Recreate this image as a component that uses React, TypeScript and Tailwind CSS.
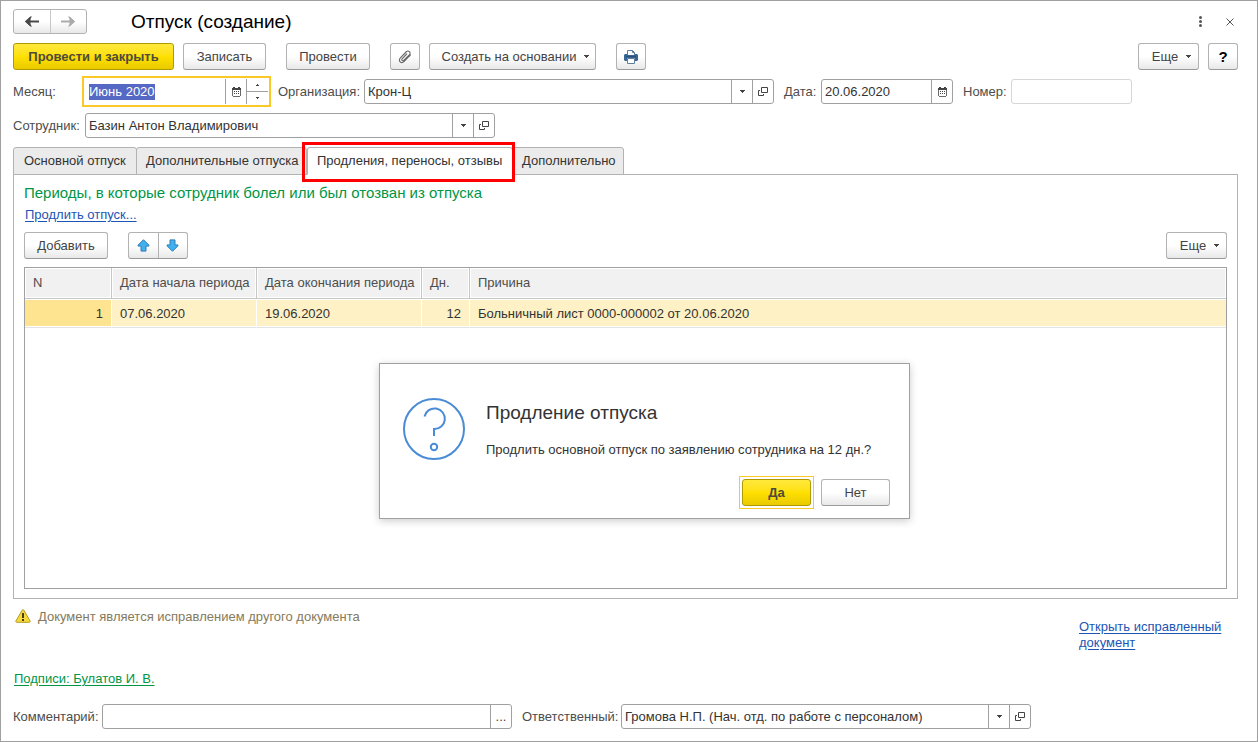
import { useEffect, useRef } from "react"
import type { ReactNode } from "react"

const btnBase =
  "flex h-[27px] shrink-0 items-center justify-center rounded-[3px] border text-[13px] leading-4"
const btnGray =
  "border-[#b2b2b2] border-b-[#9a9a9a] bg-linear-to-b from-white from-50% to-[#e8e8e8] text-[#444]"
const btnYellow =
  "border-[#b09a00] bg-linear-to-b from-[#ffe93a] via-[#ffe000] to-[#e9cb00] font-bold text-[#4d4a3c]"

const Caret = () => (
  <svg width="5" height="3" viewBox="0 0 5 3" aria-hidden="true">
    <path d="M0 0h5v1H4v1H3v1H2V2H1V1H0z" fill="#444" />
  </svg>
)

const CalendarIcon = () => (
  <svg width="9" height="10" viewBox="0 0 9 10" fill="#444" aria-hidden="true">
    <path d="M1 0h2v1H1zM6 0h2v1H6zM0 1h9v2H0z" />
    <path d="M0 3h1v6H0zM8 3h1v6H8zM1 9h7v1H1z" fill="#6a6a6a" />
    <path d="M2 4h1v1H2zM4 4h1v1H4zM6 4h1v1H6zM2 6h1v1H2zM4 6h1v1H4zM6 6h1v1H6z" />
  </svg>
)

const OpenIcon = () => (
  <svg
    width="10"
    height="10"
    viewBox="0 0 10 10"
    fill="none"
    stroke="#444"
    aria-hidden="true"
  >
    <path d="M3.5.5h6v5h-6zM2 3.5H.5v5h5V7" />
  </svg>
)

const ArrowIcon = ({ color, flip }: { color: string; flip?: boolean }) => (
  <svg
    width="14"
    height="11"
    viewBox="0 0 14 11"
    className={flip ? "rotate-180" : ""}
    aria-hidden="true"
  >
    <path d="M0 5.5L5.500.500V4.500H14v2H5.500v4z" fill={color} />
    <path d="M7 .5L3.500 5.500L7 10.500H5.500L0 5.500L5.500.500z" fill={color} />
  </svg>
)

const MoveIcon = ({ down }: { down?: boolean }) => (
  <svg
    width="13"
    height="13"
    viewBox="0 0 13 13"
    className={down ? "rotate-180" : ""}
    aria-hidden="true"
  >
    <path
      d="M6.5.7l5.4 5.4v1H9v5H4v-5H1.100v-1z"
      fill="#41b0ee"
      stroke="#2f7fb5"
      strokeLinejoin="round"
    />
  </svg>
)

const ClipIcon = () => (
  <svg
    width="14"
    height="14"
    viewBox="0 0 14 14"
    fill="none"
    stroke="#666"
    strokeWidth="1.1"
    strokeLinecap="round"
    aria-hidden="true"
  >
    <path d="M11.2 6.2l-5 5.2c-1.3 1.3-2.9 1.5-4 .5s-1-2.800.2-4.100L8 2c1-1 2.400-1.200 3.400-.300s.8 2.200-.1 3.200L6 10.200c-.6.6-1.400.7-1.900.2s-.4-1.200.2-1.900L8.700 4" />
    <path d="M12.500 4.800l-1.300 1.400" />
  </svg>
)

const PrinterIcon = () => (
  <svg width="14" height="14" viewBox="0 0 14 14" aria-hidden="true">
    <path d="M3.500 5V.500h5l2 2V5" fill="#fff" stroke="#5d7f9f" />
    <path d="M8.500.500v2h2" fill="none" stroke="#5d7f9f" />
    <path d="M1 4h2v1h8V4h2l1 1v5l-1 1h-2V8H3v3H1l-1-1V5z" fill="#376692" />
    <path d="M2 6h10v1H2z" fill="#28507a" />
    <path d="M3.500 8.500h7v5h-7z" fill="#fff" stroke="#5d7f9f" />
  </svg>
)

const WarningIcon = () => (
  <svg width="16" height="14" viewBox="0 0 16 14" aria-hidden="true">
    <path
      d="M7.200 1.100c.3-.6 1.300-.6 1.600 0l6.300 10.900c.3.600 0 1.300-.7 1.300H1.600c-.7 0-1-.7-.7-1.300z"
      fill="#f6d93a"
      stroke="#b39b2c"
    />
    <path d="M7 4h2v5H7zM7 10h2v2H7z" fill="#4a3f14" />
  </svg>
)

const QuestionIcon = () => (
  <svg
    width="62"
    height="62"
    viewBox="0 0 62 62"
    fill="none"
    stroke="#4a8bd6"
    strokeWidth="2"
    aria-hidden="true"
  >
    <circle cx="31" cy="31" r="30" />
    <path d="M21.500 18.500a10.300 10.300 0 1 1 9.500 12.500v7" />
    <circle cx="31" cy="49" r="3.200" />
  </svg>
)

const Field = ({
  id,
  label,
  value,
  className,
  labelClass = "",
  children,
}: {
  id: string
  label: string
  value: string
  className: string
  labelClass?: string
  children?: ReactNode
}) => (
  <>
    <label htmlFor={id} className={`shrink-0 text-[#4d4d4d] ${labelClass}`}>
      {label}
    </label>
    <div
      className={`flex h-[25px] min-w-0 rounded-[3px] border bg-white ${className}`}
    >
      <input
        id={id}
        type="text"
        defaultValue={value}
        className="min-w-0 flex-1 px-[3px] text-[#333] outline-none"
      />
      {children}
    </div>
  </>
)

const FieldButton = ({ label, children }: { label: string; children: ReactNode }) => (
  <button
    type="button"
    aria-label={label}
    className="flex w-[21px] shrink-0 items-center justify-center border-l border-[#a0a0a0] text-[#444]"
  >
    {children}
  </button>
)

const PickButtons = () => (
  <>
    <FieldButton label="Выбрать">
      <Caret />
    </FieldButton>
    <FieldButton label="Открыть">
      <OpenIcon />
    </FieldButton>
  </>
)

const MonthField = () => {
  const input = useRef<HTMLInputElement>(null)

  useEffect(() => {
    input.current?.focus()
    input.current?.select()
  }, [])

  return (
    <>
      <label htmlFor="month" className="w-[72px] shrink-0 text-[#4d4d4d]">
        Месяц:
      </label>
      <div className="flex h-[25px] w-[183px] items-stretch bg-white outline-2 outline-offset-1 outline-[#fac928]">
        <input
          id="month"
          ref={input}
          type="text"
          defaultValue="Июнь 2020"
          className="min-w-0 flex-1 px-1 text-[#333] outline-none selection:bg-[#5468c4] selection:text-white"
        />
        <FieldButton label="Календарь">
          <CalendarIcon />
        </FieldButton>
        <div className="flex w-[22px] shrink-0 flex-col border-l border-[#a0a0a0]">
          <button
            type="button"
            aria-label="Следующий месяц"
            className="flex flex-1 items-center justify-center border-b border-[#a0a0a0]"
          >
            <svg width="3" height="2" viewBox="0 0 3 2" aria-hidden="true">
              <path d="M1 0h1v1h1v1H0V1h1z" fill="#444" />
            </svg>
          </button>
          <button
            type="button"
            aria-label="Предыдущий месяц"
            className="flex flex-1 items-center justify-center"
          >
            <svg width="3" height="2" viewBox="0 0 3 2" aria-hidden="true">
              <path d="M0 0h3v1H2v1H1V1H0z" fill="#444" />
            </svg>
          </button>
        </div>
      </div>
    </>
  )
}

const Header = () => (
  <header className="flex h-[25px] items-center">
    <div className="flex h-[25px] w-[74px] rounded-[3px] border border-[#b2b2b2] bg-linear-to-b from-white from-50% to-[#e8e8e8]">
      <button
        type="button"
        aria-label="Назад"
        className="flex flex-1 items-center justify-center border-r border-[#c8c8c8]"
      >
        <ArrowIcon color="#4a4a4a" />
      </button>
      <button
        type="button"
        aria-label="Вперед"
        className="flex flex-1 items-center justify-center"
      >
        <ArrowIcon color="#ababab" flip />
      </button>
    </div>
    <h1 className="ml-11 text-[19px] leading-6 text-black">Отпуск (создание)</h1>
    <div className="mr-1 ml-auto flex items-center gap-[23px]">
      <button type="button" aria-label="Меню" className="p-px">
        <svg width="3" height="11" viewBox="0 0 3 11" fill="#555" aria-hidden="true">
          <circle cx="1.5" cy="1.5" r="1.5" />
          <circle cx="1.5" cy="5.5" r="1.5" />
          <circle cx="1.5" cy="9.5" r="1.5" />
        </svg>
      </button>
      <button type="button" aria-label="Закрыть">
        <svg width="8" height="8" viewBox="0 0 8 8" aria-hidden="true">
          <path d="M.5.5l7 7M7.500.500l-7 7" stroke="#555" />
        </svg>
      </button>
    </div>
  </header>
)

const Toolbar = () => (
  <div className="flex">
    <button type="button" className={`${btnBase} ${btnYellow} w-[161px]`}>
      Провести и закрыть
    </button>
    <button type="button" className={`${btnBase} ${btnGray} ml-[9px] w-[83px]`}>
      Записать
    </button>
    <button type="button" className={`${btnBase} ${btnGray} ml-5 w-[84px]`}>
      Провести
    </button>
    <button
      type="button"
      aria-label="Присоединенные файлы"
      className={`${btnBase} ${btnGray} ml-5 w-[30px]`}
    >
      <ClipIcon />
    </button>
    <button
      type="button"
      className={`${btnBase} ${btnGray} ml-[9px] w-[167px] gap-2 pl-[6px]`}
    >
      Создать на основании
      <Caret />
    </button>
    <button
      type="button"
      aria-label="Печать"
      className={`${btnBase} ${btnGray} ml-5 w-[30px]`}
    >
      <PrinterIcon />
    </button>
    <button
      type="button"
      className={`${btnBase} ${btnGray} ml-auto w-[61px] gap-2 pl-[6px]`}
    >
      Еще
      <Caret />
    </button>
    <button
      type="button"
      className={`${btnBase} ${btnGray} ml-[9px] w-[30px]`}
    >
      <span className="text-[15px] font-bold text-black">?</span>
    </button>
  </div>
)

const tabBase =
  "relative h-7 shrink-0 rounded-t-[3px] border border-[#b2b2b2] px-[9px] text-left whitespace-nowrap text-[#333]"

const Tabs = () => (
  <div role="tablist" className="relative -mb-px flex h-7">
    <button type="button" role="tab" className={`${tabBase} w-[124px] bg-[#ebebeb] pl-[10px]`}>
      Основной отпуск
    </button>
    <button
      type="button"
      role="tab"
      className={`${tabBase} -ml-px w-[171px] bg-[#ebebeb]`}
    >
      Дополнительные отпуска
    </button>
    <button
      type="button"
      role="tab"
      aria-selected="true"
      className={`${tabBase} z-10 w-[206px] border-b-white bg-white`}
    >
      Продления, переносы, отзывы
      <span className="pointer-events-none absolute -top-[6px] -right-[3px] h-10 w-[213px] border-3 border-[#fe0000]" />
    </button>
    <button
      type="button"
      role="tab"
      className={`${tabBase} -ml-px w-[112px] bg-[#ebebeb]`}
    >
      Дополнительно
    </button>
  </div>
)

const periods = [
  {
    n: 1,
    start: "07.06.2020",
    end: "19.06.2020",
    days: 12,
    reason: "Больничный лист 0000-000002 от 20.06.2020",
  },
]

const th =
  "h-[31px] border-r border-b border-[#c6c6c6] bg-[#f1f1f1] px-2 text-left font-normal whitespace-nowrap text-[#4d4d4d] shadow-[inset_0_0_0_1px_#fff] last:border-r-0"
const td =
  "h-[29px] border-r border-b border-r-white border-b-[#e3e3e3] px-2 pt-px whitespace-nowrap text-[#333] shadow-[inset_0_1px_0_#fff,inset_0_-1px_0_#fff] last:border-r-0"

const PeriodsTable = () => (
  <div className="mt-2 flex-1 border border-[#a0a0a0]">
    <table className="w-full table-fixed border-separate border-spacing-0">
      <thead>
        <tr>
          <th className={`${th} w-[87px]`}>N</th>
          <th className={`${th} w-[145px]`}>Дата начала периода</th>
          <th className={`${th} w-[165px]`}>Дата окончания периода</th>
          <th className={`${th} w-12`}>Дн.</th>
          <th className={th}>Причина</th>
        </tr>
      </thead>
      <tbody>
        {periods.map((p) => (
          <tr key={p.n} className="bg-[#fdf1c5]">
            <td className={`${td} bg-[#fee391] text-right`}>{p.n}</td>
            <td className={td}>{p.start}</td>
            <td className={td}>{p.end}</td>
            <td className={`${td} text-right`}>{p.days}</td>
            <td className={td}>{p.reason}</td>
          </tr>
        ))}
      </tbody>
    </table>
  </div>
)

const PeriodsPanel = () => (
  <section className="flex flex-1 flex-col border border-[#b2b2b2] px-[10px] pt-2 pb-[9px]">
    <h2 className="text-[15px] leading-5 text-[#009646]">
      Периоды, в которые сотрудник болел или был отозван из отпуска
    </h2>
    <a
      href="#extend"
      className="mt-1 self-start pl-px text-[#1c55b4] underline underline-offset-2"
    >
      Продлить отпуск...
    </a>
    <div className="mt-[9px] flex">
      <button type="button" className={`${btnBase} ${btnGray} w-[84px]`}>
        Добавить
      </button>
      <div className={`${btnBase} ${btnGray} ml-5 w-[60px]`}>
        <button
          type="button"
          aria-label="Переместить вверх"
          className="flex h-full flex-1 items-center justify-center border-r border-[#b2b2b2]"
        >
          <MoveIcon />
        </button>
        <button
          type="button"
          aria-label="Переместить вниз"
          className="flex h-full flex-1 items-center justify-center"
        >
          <MoveIcon down />
        </button>
      </div>
      <button
        type="button"
        className={`${btnBase} ${btnGray} ml-auto w-[61px] gap-2 pl-[6px]`}
      >
        Еще
        <Caret />
      </button>
    </div>
    <PeriodsTable />
  </section>
)

const ExtendDialog = () => (
  <div
    role="dialog"
    aria-labelledby="dialog-title"
    className="absolute top-[362px] left-[378px] z-20 flex w-[531px] border border-[#a0a0a0] bg-white pt-[34px] pr-[19px] pb-[9px] pl-[23px] shadow-[0_2px_8px_rgba(0,0,0,0.2)]"
  >
    <div className="shrink-0">
      <QuestionIcon />
    </div>
    <div className="ml-[21px] flex-1">
      <h2 id="dialog-title" className="mt-[3px] text-[19px] leading-6 text-[#333]">
        Продление отпуска
      </h2>
      <p className="mt-[17px] text-[#333]">
        Продлить основной отпуск по заявлению сотрудника на 12 дн.?
      </p>
      <div className="mt-[18px] flex items-center justify-end gap-[7px]">
        <div className="border border-[#fac928] p-[2px]">
          <button type="button" className={`${btnBase} ${btnYellow} w-[69px]`}>
            Да
          </button>
        </div>
        <button type="button" className={`${btnBase} ${btnGray} w-[69px]`}>
          Нет
        </button>
      </div>
    </div>
  </div>
)

export default function App() {
  return (
    <main className="relative flex min-h-screen flex-col border border-[#a0a0a0] bg-white pt-2 pr-[19px] pb-3 pl-3 font-['Liberation_Sans',Arial,sans-serif] text-[13px] leading-4">
      <div className="flex flex-col gap-[9px]">
        <Header />
        <Toolbar />
        <div className="flex items-center">
          <MonthField />
          <Field
            id="organization"
            label="Организация:"
            value="Крон-Ц"
            labelClass="ml-[10px] w-[86px]"
            className="w-[410px] border-[#a0a0a0]"
          >
            <PickButtons />
          </Field>
          <Field
            id="date"
            label="Дата:"
            value="20.06.2020"
            labelClass="ml-[10px] w-[37px]"
            className="w-[132px] border-[#a0a0a0]"
          >
            <FieldButton label="Календарь">
              <CalendarIcon />
            </FieldButton>
          </Field>
          <Field
            id="number"
            label="Номер:"
            value=""
            labelClass="ml-[10px] w-12"
            className="w-[121px] border-[#d6d6d6]"
          />
        </div>
        <div className="flex items-center">
          <Field
            id="employee"
            label="Сотрудник:"
            value="Базин Антон Владимирович"
            labelClass="w-[72px]"
            className="w-[410px] border-[#a0a0a0]"
          >
            <PickButtons />
          </Field>
        </div>
        <Tabs />
      </div>

      <PeriodsPanel />

      <div className="mt-[10px] flex justify-between">
        <p className="flex items-start gap-[7px] pl-[2px] text-[#857a5c]">
          <WarningIcon />
          Документ является исправлением другого документа
        </p>
        <a
          href="#corrected"
          className="mt-[10px] w-[159px] text-[#1c55b4] underline underline-offset-2"
        >
          Открыть исправленный документ
        </a>
      </div>
      <a
        href="#signatures"
        className="mt-5 self-start pl-px text-[#009646] underline underline-offset-2"
      >
        Подписи: Булатов И. В.
      </a>

      <div className="mt-[17px] flex items-center">
        <Field
          id="comment"
          label="Комментарий:"
          value=""
          labelClass="w-[89px]"
          className="w-[410px] border-[#a0a0a0]"
        >
          <FieldButton label="Редактировать комментарий">...</FieldButton>
        </Field>
        <Field
          id="responsible"
          label="Ответственный:"
          value="Громова Н.П. (Нач. отд. по работе с персоналом)"
          labelClass="ml-[10px] w-[99px]"
          className="w-[410px] border-[#a0a0a0]"
        >
          <PickButtons />
        </Field>
      </div>

      <ExtendDialog />
    </main>
  )
}
